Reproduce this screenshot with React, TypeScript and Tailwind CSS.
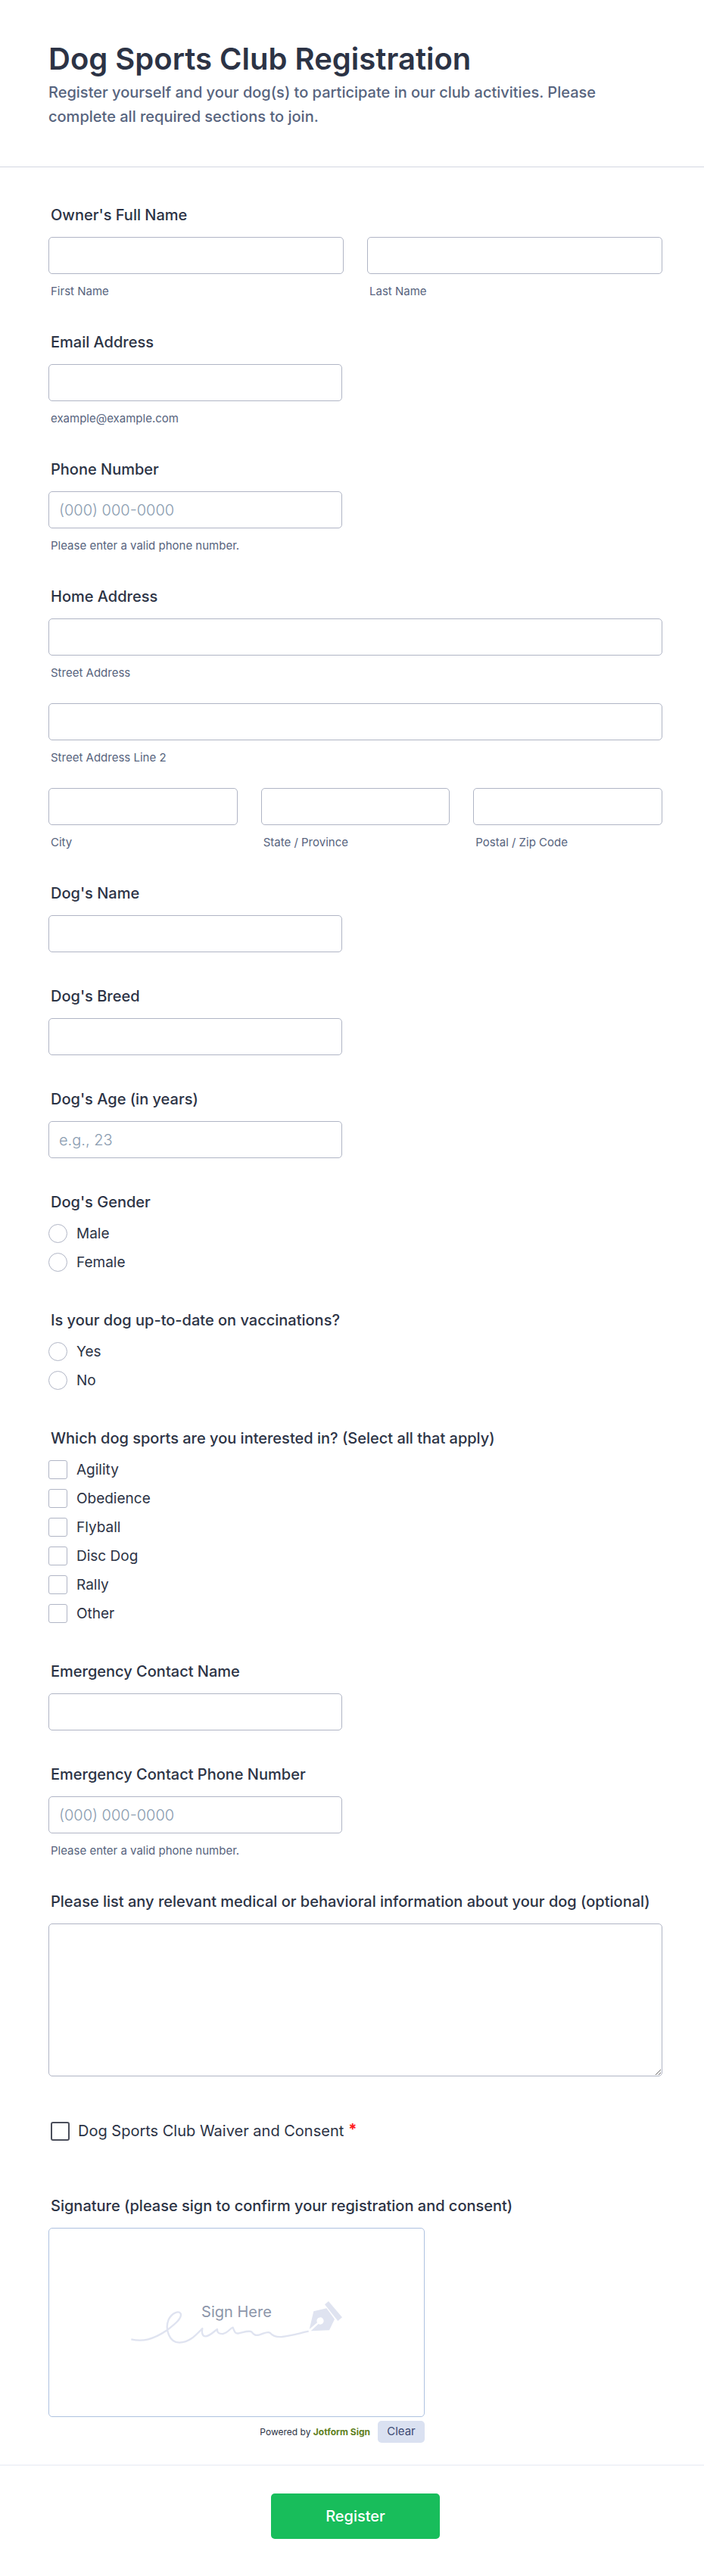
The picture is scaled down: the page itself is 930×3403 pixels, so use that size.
import type { ReactNode } from "react";

const inputClass =
  "block h-[49px] w-full rounded-[5px] border border-[#b0b5c5] bg-white px-[13px] text-xl font-light text-[#2c3345] placeholder:text-[#8a9cb0] placeholder:opacity-100";

const labelClass = "block px-[3px] text-xl leading-[26px] font-medium text-[#2c3345]";

const sports = ["Agility", "Obedience", "Flyball", "Disc Dog", "Rally", "Other"];

type InputProps = {
  id: string;
  hint?: string;
  type?: string;
  placeholder?: string;
};

function HintedInput({ id, hint, type = "text", placeholder }: InputProps) {
  return (
    <div>
      <input
        id={id}
        name={id}
        type={type}
        placeholder={placeholder}
        aria-describedby={hint ? `${id}-hint` : undefined}
        className={inputClass}
      />
      {hint && (
        <p
          id={`${id}-hint`}
          className="mt-3.5 px-[3px] text-[15px] leading-[18px] text-[#57647e]"
        >
          {hint}
        </p>
      )}
    </div>
  );
}

// Text box with its own caption below, used inside a group
function SubInput({ id, caption }: { id: string; caption: string }) {
  return (
    <div>
      <input id={id} name={id} type="text" className={inputClass} />
      <label
        htmlFor={id}
        className="mt-3.5 block px-[3px] text-[15px] leading-[18px] text-[#57647e]"
      >
        {caption}
      </label>
    </div>
  );
}

function Field({ label, ...input }: InputProps & { label: string }) {
  return (
    <div>
      <label htmlFor={input.id} className={`${labelClass} mb-4`}>
        {label}
      </label>
      <div className="max-w-[388px]">
        <HintedInput {...input} />
      </div>
    </div>
  );
}

function Group({ legend, children }: { legend: string; children: ReactNode }) {
  return (
    <fieldset className="min-w-0">
      <legend className={`${labelClass} mb-4`}>{legend}</legend>
      {children}
    </fieldset>
  );
}

type OptionsProps = {
  type: "radio" | "checkbox";
  name: string;
  options: string[];
};

function Options({ type, name, options }: OptionsProps) {
  return (
    <div className="flex flex-col items-start gap-[13px] pb-1.5">
      {options.map((option) => (
        <label
          key={option}
          className="flex items-center gap-3 text-[19px] leading-[25px] text-[#2c3345]"
        >
          <input
            type={type}
            name={name}
            value={option}
            className={`size-[25px] appearance-none border border-[#b0b5c5] bg-white checked:bg-[#2e69ff] ${
              type === "radio" ? "rounded-full" : "rounded-[3px]"
            }`}
          />
          {option}
        </label>
      ))}
    </div>
  );
}

function SignatureMark() {
  return (
    <svg viewBox="60 90 846 174" className="h-[58px] w-[282px]" aria-hidden="true">
      <path
        d="M64 244C110 254 150 246 206 208C240 182 266 160 260 142C252 130 226 138 212 166C196 205 216 258 256 257C295 256 320 228 346 201C342 222 348 232 358 232C376 232 392 212 405 204C404 220 414 223 428 222C448 218 458 198 467 197C472 208 474 224 490 220C510 216 530 208 540 214C550 226 556 230 572 226C592 220 604 212 614 218C626 232 640 236 662 234C696 230 730 220 767 212"
        fill="none"
        stroke="#dfe3f0"
        strokeWidth="7"
        strokeLinejoin="round"
      />
      <path d="M787 133L838 121L870 164L849 208L776 211L806 183A14 14 0 1 0 801 178L770 204Z" fill="#dfe3f0" />
      <path d="M831 106L846 93L900 157L883 171Z" fill="#dfe3f0" />
    </svg>
  );
}

export default function App() {
  return (
    <form className="bg-white font-['Inter',sans-serif] text-[#2c3345]">
      <header className="border-b border-[#d3d6e1] px-16 pt-[50px] pb-[50px]">
        <h1 className="text-[40px] leading-[56px] font-semibold">
          Dog Sports Club Registration
        </h1>
        <p className="max-w-[760px] text-xl leading-8 font-medium text-[#57647e]">
          Register yourself and your dog(s) to participate in our club activities.
          Please complete all required sections to join.
        </p>
      </header>

      <div className="flex flex-col gap-[45px] pt-[50px] pr-[55px] pl-16">
        <Group legend="Owner's Full Name">
          <div className="grid grid-cols-2 gap-[31px]">
            <SubInput id="first-name" caption="First Name" />
            <SubInput id="last-name" caption="Last Name" />
          </div>
        </Group>

        <Field id="email" label="Email Address" type="email" hint="example@example.com" />
        <Field
          id="phone"
          label="Phone Number"
          type="tel"
          placeholder="(000) 000-0000"
          hint="Please enter a valid phone number."
        />

        <Group legend="Home Address">
          <div className="flex flex-col gap-[31px]">
            <SubInput id="street" caption="Street Address" />
            <SubInput id="street-2" caption="Street Address Line 2" />
            <div className="grid grid-cols-3 gap-[31px]">
              <SubInput id="city" caption="City" />
              <SubInput id="state" caption="State / Province" />
              <SubInput id="postal" caption="Postal / Zip Code" />
            </div>
          </div>
        </Group>

        <Field id="dog-name" label="Dog's Name" />
        <Field id="dog-breed" label="Dog's Breed" />
        <Field id="dog-age" label="Dog's Age (in years)" placeholder="e.g., 23" />

        <Group legend="Dog's Gender">
          <Options type="radio" name="gender" options={["Male", "Female"]} />
        </Group>
        <Group legend="Is your dog up-to-date on vaccinations?">
          <Options type="radio" name="vaccinated" options={["Yes", "No"]} />
        </Group>
        <Group legend="Which dog sports are you interested in? (Select all that apply)">
          <Options type="checkbox" name="sports" options={sports} />
        </Group>

        <Field id="emergency-name" label="Emergency Contact Name" />
        <Field
          id="emergency-phone"
          label="Emergency Contact Phone Number"
          type="tel"
          placeholder="(000) 000-0000"
          hint="Please enter a valid phone number."
        />

        <div>
          <label htmlFor="medical" className={`${labelClass} mb-4`}>
            Please list any relevant medical or behavioral information about your dog
            (optional)
          </label>
          <textarea
            id="medical"
            name="medical"
            className="block h-[202px] w-full rounded-[5px] border border-[#b0b5c5] bg-white p-[13px] text-xl"
          />
        </div>

        <div className="px-[3px] pt-[15px] pb-7">
          <label className="flex items-center gap-[11px] text-xl leading-[25px]">
            <input
              type="checkbox"
              name="waiver"
              required
              className="size-[25px] appearance-none rounded-[3px] border-2 border-[#4b4e5b] bg-white checked:bg-[#2e69ff]"
            />
            <span className="flex items-start gap-1.5">
              Dog Sports Club Waiver and Consent
              <span className="leading-5 font-bold text-[#ff1a1a]">*</span>
            </span>
          </label>
        </div>

        <section aria-labelledby="signature-label">
          <h2 id="signature-label" className={`${labelClass} mb-4`}>
            Signature (please sign to confirm your registration and consent)
          </h2>
          <div className="max-w-[497px]">
            <div className="relative flex h-[250px] items-center justify-center rounded-[5px] border border-[#aec2e0]">
              <SignatureMark />
              <span className="absolute inset-x-0 top-[98px] text-center text-xl leading-6 text-[#8d96aa]">
                Sign Here
              </span>
            </div>
            <div className="mt-[5px] flex items-center justify-end gap-2.5">
              <p className="text-xs">
                Powered by <b className="font-bold text-[#5f7f22]">Jotform Sign</b>
              </p>
              <button
                type="button"
                className="h-[29px] min-w-[62px] rounded-[5px] bg-[#dae1f1] px-3 text-[15px] text-[#3d4a73]"
              >
                Clear
              </button>
            </div>
          </div>
        </section>
      </div>

      <footer className="mt-[29px] flex justify-center border-t border-[#e6e9f3] pt-[37px] pb-[49px] pr-[55px] pl-16">
        <button
          type="submit"
          className="h-[60px] min-w-[223px] rounded-[5px] bg-[#18bd5b] px-5 text-xl font-medium text-white"
        >
          Register
        </button>
      </footer>
    </form>
  );
}
